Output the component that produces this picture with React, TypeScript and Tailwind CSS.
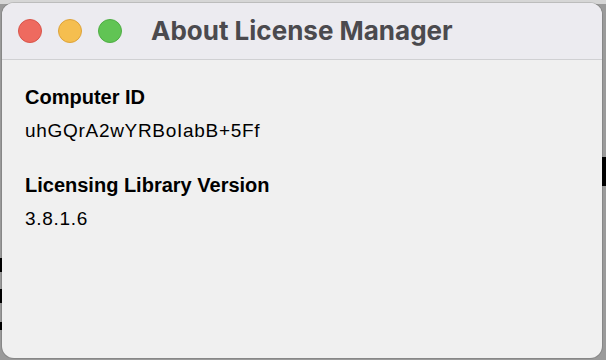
import React from "react";

export default function App() {
  return (
    <div className="relative w-[606px] h-[360px] overflow-hidden bg-[#9a9a9a]">
      <div className="absolute left-0 top-0 w-[606px] h-[4px] bg-[#d6d6d6]" />
      <div className="absolute left-0 top-[258px] w-[3px] h-[14px] bg-black" />
      <div className="absolute left-0 top-[289px] w-[3px] h-[14px] bg-black" />
      <div className="absolute left-0 top-[322px] w-[3px] h-[8px] bg-black" />
      <div className="absolute right-0 top-[157px] w-[4px] h-[29px] bg-black" />
      <div className="absolute left-[2px] top-[3px] w-[600px] h-[355px] rounded-[12px] overflow-hidden bg-[#f0f0f0] flex flex-col shadow-[0_0_0_1px_rgba(0,0,0,0.12)]">
        <div className="h-[57px] shrink-0 bg-[#ecebf0] border-b border-[#d0d0d3] flex items-center pl-[16px]">
          <div className="flex gap-[16px]">
            <span className="w-[24px] h-[24px] rounded-full bg-[#ee6a5f] border border-[#d9554b]" />
            <span className="w-[24px] h-[24px] rounded-full bg-[#f5be4f] border border-[#dea33a]" />
            <span className="w-[24px] h-[24px] rounded-full bg-[#61c454] border border-[#4fae44]" />
          </div>
          <div
            className="ml-[29px] text-[26px] font-bold text-[#4b4a4e] leading-none"
            style={{ fontFamily: "Inter, 'Liberation Sans', sans-serif" }}
          >
            About License Manager
          </div>
        </div>
        <div
          className="pl-[23px] pt-[26px] text-black"
          style={{ fontFamily: "'Liberation Sans', Arial, sans-serif" }}
        >
          <div className="text-[20px] font-bold leading-[22px]">Computer ID</div>
          <div className="mt-[12px] text-[19px] tracking-[0.7px] leading-[22px]">uhGQrA2wYRBoIabB+5Ff</div>
          <div className="mt-[32px] text-[20px] font-bold leading-[22px]">Licensing Library Version</div>
          <div className="mt-[12px] text-[19px] tracking-[0.7px] leading-[22px]">3.8.1.6</div>
        </div>
      </div>
    </div>
  );
}
